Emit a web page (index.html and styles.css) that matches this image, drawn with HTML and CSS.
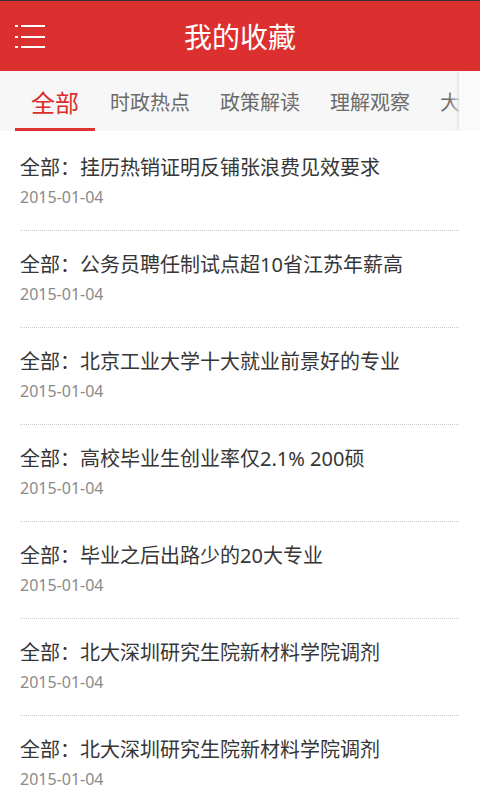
FILE: index.html
```html
<!DOCTYPE html>
<html lang="zh-CN">
<head>
<meta charset="utf-8">
<title>我的收藏</title>
<link rel="stylesheet" href="styles.css">
</head>
<body>
<div class="statusline"></div>
<header class="appbar">
  <div class="menu">
    <svg width="30" height="24" viewBox="0 0 30 24">
      <rect x="0" y="0" width="3" height="2" fill="#fff"/>
      <rect x="6" y="0" width="24" height="2" fill="#fff"/>
      <rect x="0" y="11" width="3" height="2" fill="#fff"/>
      <rect x="6" y="11" width="24" height="2" fill="#fff"/>
      <rect x="0" y="21" width="3" height="2" fill="#fff"/>
      <rect x="6" y="21" width="24" height="2" fill="#fff"/>
    </svg>
  </div>
  <h1 class="title">我的收藏</h1>
  <div></div>
</header>
<nav class="tabs">
  <div class="tab active">全部</div>
  <div class="tab">时政热点</div>
  <div class="tab">政策解读</div>
  <div class="tab">理解观察</div>
  <div class="tab">大学生</div>
  <div class="tabs-edge"></div>
</nav>
<ul class="list">
  <li class="item"><div class="item-title">全部：挂历热销证明反铺张浪费见效要求</div><div class="item-date">2015-01-04</div></li>
  <li class="item"><div class="item-title">全部：公务员聘任制试点超10省江苏年薪高</div><div class="item-date">2015-01-04</div></li>
  <li class="item"><div class="item-title">全部：北京工业大学十大就业前景好的专业</div><div class="item-date">2015-01-04</div></li>
  <li class="item"><div class="item-title">全部：高校毕业生创业率仅2.1% 200硕</div><div class="item-date">2015-01-04</div></li>
  <li class="item"><div class="item-title">全部：毕业之后出路少的20大专业</div><div class="item-date">2015-01-04</div></li>
  <li class="item"><div class="item-title">全部：北大深圳研究生院新材料学院调剂</div><div class="item-date">2015-01-04</div></li>
  <li class="item"><div class="item-title">全部：北大深圳研究生院新材料学院调剂</div><div class="item-date">2015-01-04</div></li>
</ul>
</body>
</html>
```
FILE: styles.css
```css
* { box-sizing: border-box; }
html, body {
  margin: 0;
  padding: 0;
  background: #ffffff;
  font-family: "Noto Sans", "Noto Sans CJK SC", sans-serif;
  width: 480px;
  height: 800px;
  overflow: hidden;
}
.statusline {
  height: 1px;
  background: #333333;
}
.appbar {
  height: 70px;
  background: #dc2f30;
  display: grid;
  grid-template-columns: 1fr auto 1fr;
  align-items: center;
}
.menu {
  padding-left: 15px;
  padding-top: 1px;
  display: flex;
  align-items: center;
}
.menu svg { display: block; }
.title {
  margin: 0;
  color: #ffffff;
  font-size: 28px;
  font-weight: normal;
  line-height: 40px;
  font-family: "Noto Sans CJK SC", sans-serif;
}
.tabs {
  position: relative;
  height: 60px;
  background: #f7f7f7;
  display: flex;
  align-items: stretch;
  padding-left: 15px;
  overflow: hidden;
  white-space: nowrap;
}
.tab {
  flex: none;
  padding: 0 15px;
  font-size: 20px;
  color: #6a6a6a;
  display: flex;
  align-items: center;
  font-family: "Noto Sans CJK SC", sans-serif;
  border-bottom: 3px solid transparent;
  padding-top: 3px;
}
.tab.active {
  width: 80px;
  justify-content: center;
  padding: 0;
  padding-top: 3px;
  font-size: 24px;
  color: #dd2c2c;
  border-bottom-color: #e03232;
}
.tabs-edge {
  position: absolute;
  top: 0;
  right: 0;
  width: 21px;
  height: 60px;
  background: #fafafa;
  box-shadow: -1px 0 3px rgba(0, 0, 0, 0.10), -5px 0 6px rgba(247, 247, 247, 0.7);
}
.list {
  list-style: none;
  margin: 3px 0 0 0;
  padding: 0;
}
.item {
  margin: 0 21px 0 20px;
  padding: 20px 0 22px 0;
  border-bottom: 1px dotted #c8c8c8;
}
.item-title {
  font-size: 20px;
  line-height: 28px;
  color: #363636;
  white-space: nowrap;
}
.item-date {
  margin-top: 4px;
  font-size: 16px;
  line-height: 22px;
  color: #8a8a8a;
}
```
